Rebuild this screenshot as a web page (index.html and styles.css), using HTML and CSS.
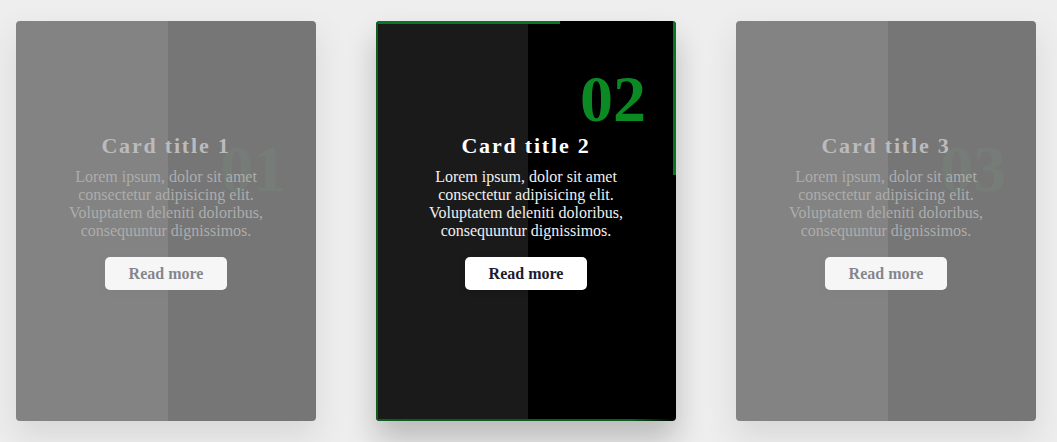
FILE: index.html
```html
<!DOCTYPE html>
<html lang="en">
<head>
<meta charset="utf-8">
<title>Cards</title>
<link rel="stylesheet" href="styles.css">
</head>
<body>
<main class="cards">
  <article class="card card--dim">
    <span class="card__num">01</span>
    <div class="card__content">
      <h2 class="card__title">Card title 1</h2>
      <p class="card__text">Lorem ipsum, dolor sit amet consectetur adipisicing elit. Voluptatem deleniti doloribus, consequuntur dignissimos.</p>
      <a class="card__btn" href="#">Read more</a>
    </div>
  </article>
  <article class="card card--active">
    <span class="edge edge--top"></span>
    <span class="edge edge--right"></span>
    <span class="edge edge--bottom"></span>
    <span class="edge edge--left"></span>
    <span class="card__num">02</span>
    <div class="card__content">
      <h2 class="card__title">Card title 2</h2>
      <p class="card__text">Lorem ipsum, dolor sit amet consectetur adipisicing elit. Voluptatem deleniti doloribus, consequuntur dignissimos.</p>
      <a class="card__btn" href="#">Read more</a>
    </div>
  </article>
  <article class="card card--dim">
    <span class="card__num">03</span>
    <div class="card__content">
      <h2 class="card__title">Card title 3</h2>
      <p class="card__text">Lorem ipsum, dolor sit amet consectetur adipisicing elit. Voluptatem deleniti doloribus, consequuntur dignissimos.</p>
      <a class="card__btn" href="#">Read more</a>
    </div>
  </article>
</main>
</body>
</html>
```
FILE: styles.css
```css
* { box-sizing: border-box; }

html, body {
  margin: 0;
  padding: 0;
  background: #eeeeee;
  font-family: "Liberation Serif", "Times New Roman", serif;
}

.cards {
  display: flex;
  gap: 60px;
  padding: 21px 16px;
}

.card {
  position: relative;
  flex: 0 0 300px;
  width: 300px;
  height: 400px;
  background: #000;
  border-radius: 4px;
  overflow: hidden;
  box-shadow: 0 15px 30px rgba(0, 0, 0, 0.18);
}

.card::before {
  content: "";
  position: absolute;
  left: 0;
  top: 0;
  width: 152px;
  height: 100%;
  background: rgba(255, 255, 255, 0.1);
  pointer-events: none;
}

.card--dim {
  opacity: 0.5;
}

.card__num {
  position: absolute;
  right: 30px;
  top: 45px;
  font-size: 66px;
  font-weight: 700;
  line-height: 1;
  color: #0b8a24;
}

.card--dim .card__num {
  top: 115px;
  color: rgba(11, 138, 36, 0.1);
}

.card__content {
  position: relative;
  display: flex;
  flex-direction: column;
  align-items: center;
  padding: 112px 38px 0;
  text-align: center;
}

.card__title {
  margin: 0 0 10px;
  font-size: 22px;
  font-weight: 700;
  letter-spacing: 1.8px;
  line-height: 25px;
  color: #fff;
}

.card__text {
  margin: 0;
  font-size: 16px;
  line-height: 18px;
  color: #f0f0f0;
}

.card--dim .card__title {
  color: #8a8a8a;
}

.card--dim .card__text {
  color: #6e6e6e;
}

.card__btn {
  display: flex;
  align-items: center;
  justify-content: center;
  width: 122px;
  height: 33px;
  margin-top: 17px;
  background: #fff;
  border-radius: 5px;
  font-size: 16px;
  font-weight: 700;
  color: #1c1c2e;
  text-decoration: none;
  box-shadow: 0 2px 6px rgba(0, 0, 0, 0.15);
}

.card--active {
  box-shadow: 0 18px 30px rgba(0, 0, 0, 0.22);
}

.edge {
  position: absolute;
  background: #0b7524;
  z-index: 2;
}

.edge--top {
  left: 0;
  top: 0;
  width: 184px;
  height: 3px;
}

.edge--right {
  right: 0;
  top: 0;
  width: 3px;
  height: 154px;
}

.edge--bottom {
  left: 0;
  bottom: 0;
  width: 100%;
  height: 2px;
  background: linear-gradient(to right, #0b5e1e, #0b5e1e 85%, rgba(11, 94, 30, 0));
}

.edge--left {
  left: 0;
  top: 0;
  width: 2px;
  height: 100%;
  background: #0b5e1e;
}
```
